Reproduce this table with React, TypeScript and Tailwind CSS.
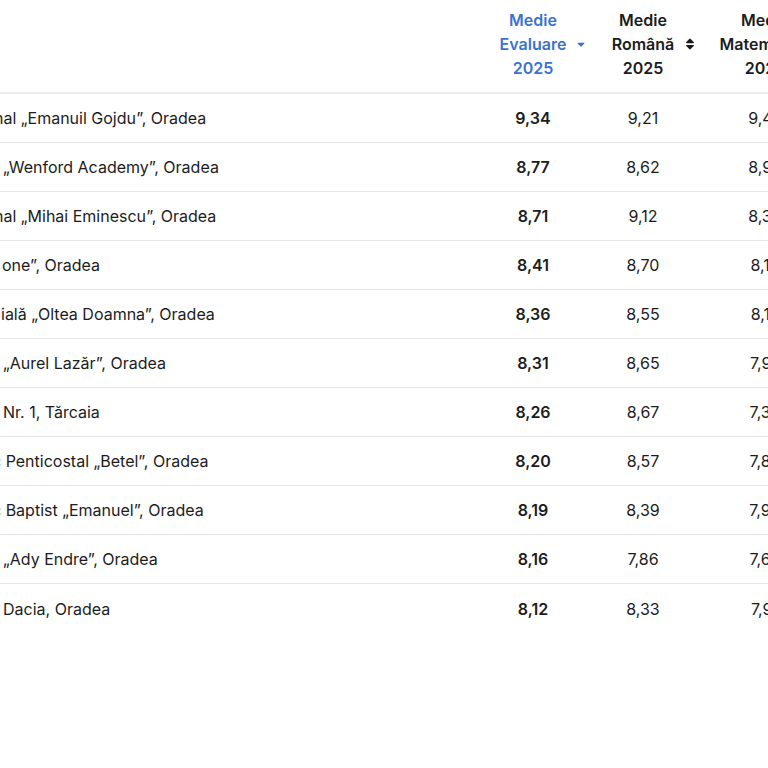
import { FaSort, FaSortDown } from 'react-icons/fa';

type Row = {
  name: string;
  shift: string;
  evaluare: string;
  romana: string;
  mate: string;
};

const rows: Row[] = [
  { name: 'nal „Emanuil Gojdu”, Oradea', shift: '-ml-[6px]', evaluare: '9,34', romana: '9,21', mate: '9,47' },
  { name: '„Wenford Academy”, Oradea', shift: 'ml-[3px]', evaluare: '8,77', romana: '8,62', mate: '8,92' },
  { name: 'nal „Mihai Eminescu”, Oradea', shift: '-ml-[6px]', evaluare: '8,71', romana: '9,12', mate: '8,30' },
  { name: 'one”, Oradea', shift: 'ml-[2px]', evaluare: '8,41', romana: '8,70', mate: '8,12' },
  { name: 'ială „Oltea Doamna”, Oradea', shift: 'ml-[1px]', evaluare: '8,36', romana: '8,55', mate: '8,17' },
  { name: '„Aurel Lazăr”, Oradea', shift: 'ml-[3px]', evaluare: '8,31', romana: '8,65', mate: '7,97' },
  { name: 'Nr. 1, Tărcaia', shift: 'ml-[3px]', evaluare: '8,26', romana: '8,67', mate: '7,35' },
  { name: 'c Penticostal „Betel”, Oradea', shift: '-ml-[8px]', evaluare: '8,20', romana: '8,57', mate: '7,83' },
  { name: 'c Baptist „Emanuel”, Oradea', shift: '-ml-[8px]', evaluare: '8,19', romana: '8,39', mate: '7,99' },
  { name: '„Ady Endre”, Oradea', shift: 'ml-[3px]', evaluare: '8,16', romana: '7,86', mate: '7,66' },
  { name: 'Dacia, Oradea', shift: 'ml-[3px]', evaluare: '8,12', romana: '8,33', mate: '7,91' },
];

function HeaderCell({
  lines,
  active,
  icon,
}: {
  lines: string[];
  active?: boolean;
  icon?: 'down' | 'both';
}) {
  return (
    <div className="flex justify-center pt-2 pb-3">
      <div
        className={`relative text-center font-semibold leading-6 ${
          active ? 'text-[#3b72d2]' : 'text-[#1c1c1c]'
        }`}
      >
        {lines.map((l) => (
          <div key={l}>{l}</div>
        ))}
        {icon === 'down' && (
          <FaSortDown className="absolute left-full top-1/2 ml-[9px] -translate-y-[8px] text-[12px]" />
        )}
        {icon === 'both' && (
          <FaSort className="absolute left-full top-1/2 ml-[9px] -translate-y-[7px] text-[14px]" />
        )}
      </div>
    </div>
  );
}

export default function App() {
  return (
    <div
      className="w-[768px] h-[768px] overflow-hidden bg-white text-base text-[#1c1c1c]"
      style={{ fontFamily: 'Inter, "Noto Sans", sans-serif' }}
    >
      <div className="w-[832px]">
        <div className="grid grid-cols-[478px_110px_110px_134px] border-b-2 border-[#ececec]">
          <div />
          <HeaderCell lines={['Medie', 'Evaluare', '2025']} active icon="down" />
          <HeaderCell lines={['Medie', 'Română', '2025']} icon="both" />
          <HeaderCell lines={['Medie', 'Matematică', '2025']} />
        </div>
        {rows.map((r, i) => (
          <div
            key={r.name}
            className={`grid grid-cols-[478px_110px_110px_134px] h-[49px] items-center ${
              i < rows.length - 1 ? 'border-b border-[#e6e6e6]' : ''
            }`}
          >
            <div className="overflow-hidden whitespace-nowrap">
              <span className={`inline-block ${r.shift}`}>{r.name}</span>
            </div>
            <div className="text-center font-semibold">{r.evaluare}</div>
            <div className="text-center">{r.romana}</div>
            <div className="text-center">{r.mate}</div>
          </div>
        ))}
      </div>
    </div>
  );
}
